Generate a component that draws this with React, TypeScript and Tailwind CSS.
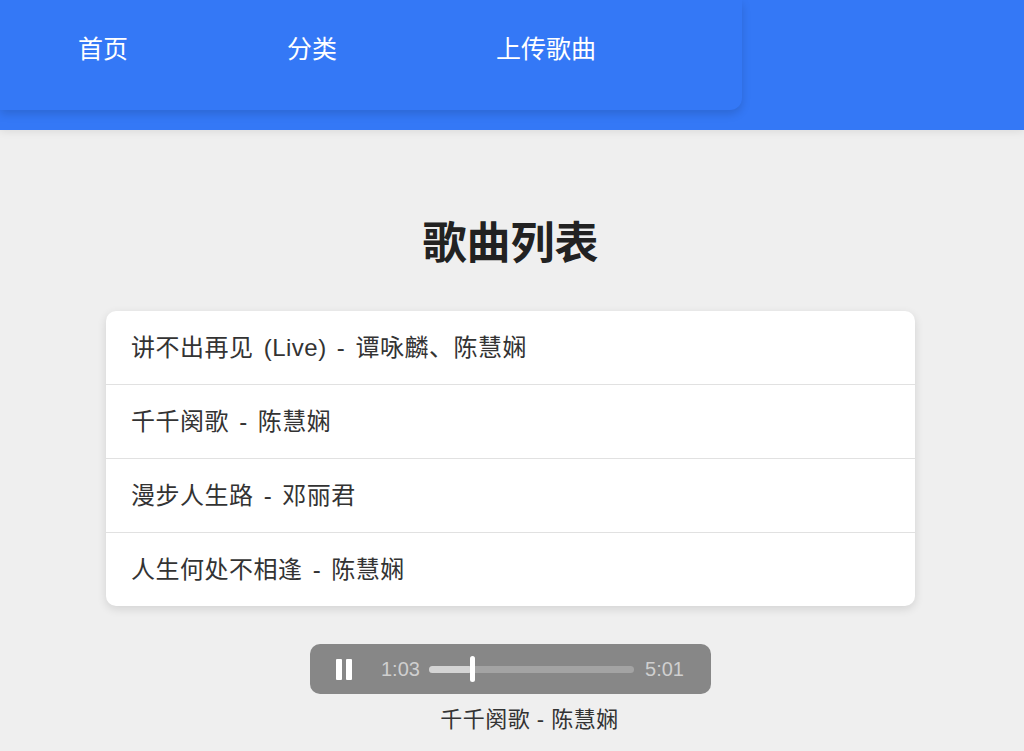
const songs = [
  '讲不出再见 (Live) - 谭咏麟、陈慧娴',
  '千千阕歌 - 陈慧娴',
  '漫步人生路 - 邓丽君',
  '人生何处不相逢 - 陈慧娴',
];

const navLinks = ['首页', '分类', '上传歌曲'];

function Player({ current, total, progress }: { current: string; total: string; progress: number }) {
  return (
    <div className="flex h-[50px] w-[401px] items-center rounded-[10px] bg-[#878787] pl-[26px] pr-[27px]">
      <div className="flex gap-[4px]">
        <span className="h-[21px] w-[6px] rounded-[1px] bg-white" />
        <span className="h-[21px] w-[6px] rounded-[1px] bg-white" />
      </div>
      <span className="ml-[29px] text-[20px] text-[#cfcfcf]">{current}</span>
      <div className="relative ml-[9px] h-[7px] flex-1 rounded-full bg-[#a3a3a3]">
        <div className="h-full rounded-full bg-[#d4d4d4]" style={{ width: `${progress}%` }} />
        <div
          className="absolute top-[-10px] h-[26px] w-[5px] rounded-full bg-white"
          style={{ left: `calc(${progress}% - 2px)` }}
        />
      </div>
      <span className="ml-[11px] text-[20px] text-[#cfcfcf]">{total}</span>
    </div>
  );
}

export default function App() {
  return (
    <div
      className="min-h-[751px] bg-[#efefef]"
      style={{ fontFamily: '"Liberation Sans", "Noto Sans CJK SC", sans-serif' }}
    >
      <header className="h-[130px] bg-[#3478f6] shadow-[0_2px_8px_rgba(0,0,0,0.08)]">
        <nav className="flex h-[110px] w-[742px] items-center rounded-br-[12px] bg-[#3478f6] pb-[10px] pl-[78px] shadow-[0_4px_10px_rgba(0,0,0,0.14)]">
          {navLinks.map((label) => (
            <a key={label} href="#" className="w-[209px] text-[25px] text-white">
              {label}
            </a>
          ))}
        </nav>
      </header>

      <main className="flex w-[1021px] flex-col items-center">
        <h1 className="mt-[87px] text-[44px] font-bold leading-[53px] text-[#222]">歌曲列表</h1>

        <ul className="mt-[41px] w-[809px] overflow-hidden rounded-[10px] bg-white shadow-[0_3px_10px_rgba(0,0,0,0.12)]">
          {songs.map((song, i) => (
            <li
              key={song}
              className={`flex items-center pl-[25px] text-[24px] tracking-[0.5px] [word-spacing:3px] text-[#333] ${
                i < songs.length - 1 ? 'h-[74px] border-b border-[#e1e1e1]' : 'h-[73px]'
              }`}
            >
              {song}
            </li>
          ))}
        </ul>

        <div className="mt-[38px]">
          <Player current="1:03" total="5:01" progress={21} />
        </div>
        <p className="mt-[11px] pl-[38px] text-[22px] leading-[30px] tracking-[0.5px] text-[#333]">千千阕歌 - 陈慧娴</p>
      </main>
    </div>
  );
}
